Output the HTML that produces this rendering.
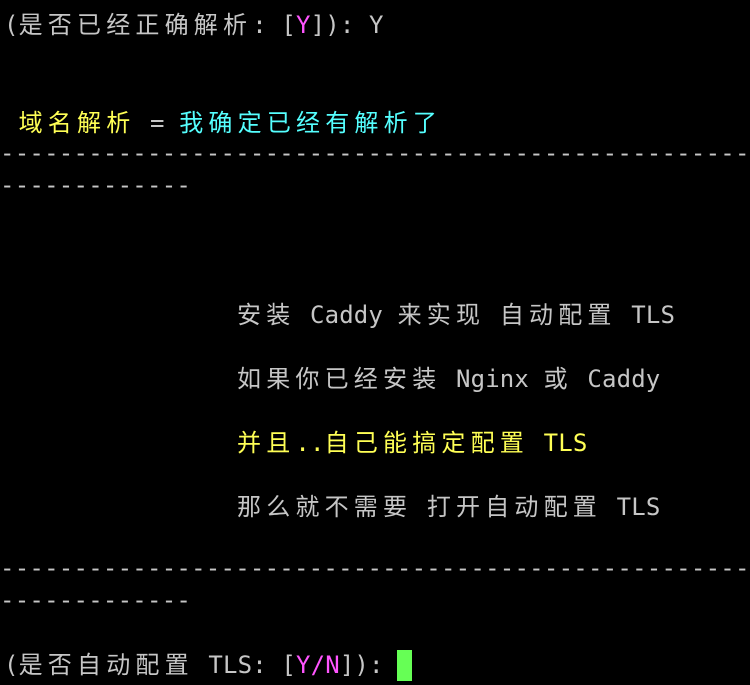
<!DOCTYPE html>
<html><head><meta charset="utf-8"><style>
html,body{margin:0;background:#000;width:750px;height:685px;overflow:hidden}
.l{position:absolute;left:4px;height:32px;line-height:32px;white-space:pre;font-family:"DejaVu Sans Mono","Liberation Mono",monospace;font-size:24px;letter-spacing:0.15px;color:#c6c6c6}
.c{font-family:"Noto Sans CJK SC",sans-serif;font-size:24px;letter-spacing:5.2px}
.y{color:#ffff55}.b{color:#55ffff}.m{color:#ff55ff}
.d{letter-spacing:0.25px}
.cur{position:absolute;left:397px;top:650px;width:15px;height:31px;background:#66ff55}
</style></head><body>
<div class="l" style="top:7px">(<span class="c">是否已经正确解析</span>: [<span class="m">Y</span>]): Y</div>
<div class="l" style="top:105px"> <span class="y"><span class="c">域名解析</span></span> = <span class="b c">我确定已经有解析了</span></div>
<div class="l d" style="top:137px;left:0">---------------------------------------------------</div>
<div class="l d" style="top:169px;left:0">-------------</div>
<div class="l" style="top:297px;left:237px"><span class="c">安装</span> Caddy <span class="c">来实现</span> <span class="c">自动配置</span> TLS</div>
<div class="l" style="top:361px;left:237px"><span class="c">如果你已经安装</span> Nginx <span class="c">或</span> Caddy</div>
<div class="l y" style="top:425px;left:237px"><span class="c">并且</span>..<span class="c">自己能搞定配置</span> TLS</div>
<div class="l" style="top:489px;left:237px"><span class="c">那么就不需要</span> <span class="c">打开自动配置</span> TLS</div>
<div class="l d" style="top:552px;left:0">---------------------------------------------------</div>
<div class="l d" style="top:584px;left:0">-------------</div>
<div class="l" style="top:647px">(<span class="c">是否自动配置</span> TLS: [<span class="m">Y/N</span>]): </div>
<div class="cur"></div>
</body></html>
